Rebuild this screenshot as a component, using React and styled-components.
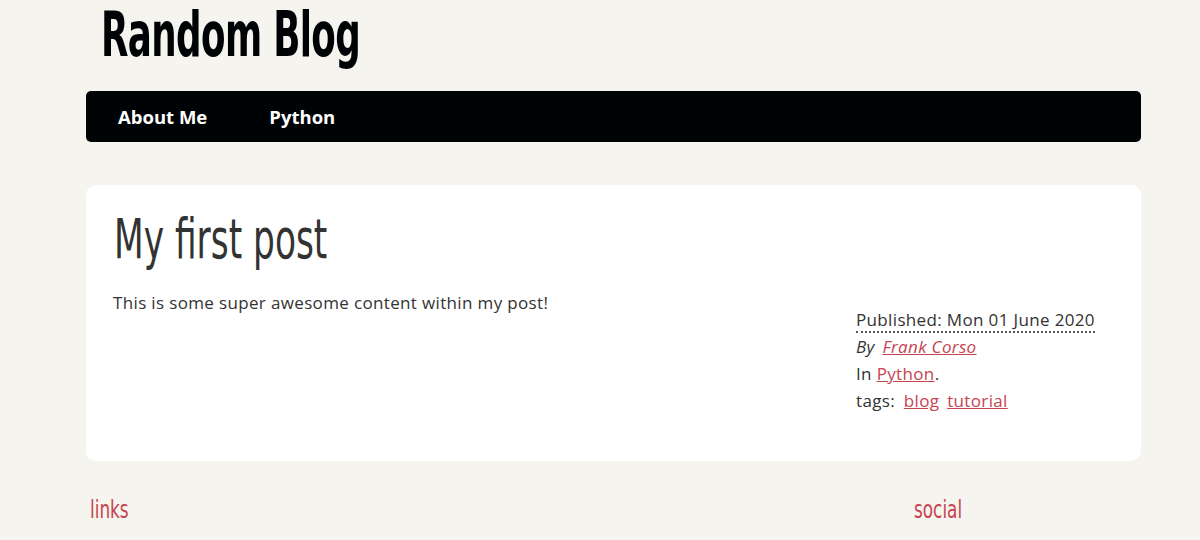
import React from "react";
import styled, { createGlobalStyle } from "styled-components";

const headingFont = `"DejaVu Sans Condensed", "DejaVu Sans", sans-serif`;

const GlobalStyle = createGlobalStyle`
  body {
    margin: 0;
    background: #f5f4ef;
    color: #333;
    font-family: "Open Sans", "DejaVu Sans", sans-serif;
  }
`;

const Page = styled.div`
  width: 1055px;
  margin-left: 86px;
`;

// the heading face in the original is very narrow, so squeeze the condensed one
const Narrow = styled.span`
  display: inline-block;
  white-space: nowrap;
  transform: scaleX(${(p) => p.$sx});
  transform-origin: left center;
`;

const SiteTitle = styled.h1`
  margin: 0;
  padding: 0 0 0 15px;
  height: 91px;
  font-family: ${headingFont};
  font-stretch: condensed;
  font-weight: bold;
  font-size: 62px;
  line-height: 70px;
  letter-spacing: -1px;
  color: #000305;
`;

const Nav = styled.nav`
  display: flex;
  align-items: center;
  gap: 62px;
  height: 51px;
  padding-left: 32px;
  background: #000305;
  border-radius: 5px;
`;

const NavLink = styled.a`
  color: #fff;
  font-weight: bold;
  font-size: 18.5px;
  text-decoration: none;
`;

const Card = styled.article`
  display: flex;
  justify-content: space-between;
  margin-top: 43px;
  height: 276px;
  box-sizing: border-box;
  padding: 24px 45px 0 27px;
  background: #fff;
  border-radius: 10px;
`;

const PostTitle = styled.h2`
  margin: 0;
  padding-left: 1px;
  font-family: ${headingFont};
  font-stretch: condensed;
  font-weight: normal;
  font-size: 55px;
  line-height: 60px;
  color: #333;
`;

const Content = styled.p`
  margin: 22px 0 0 0;
  font-size: 17px;
  letter-spacing: 0.35px;
`;

const Meta = styled.footer`
  margin-top: 97px;
  width: 240px;
  font-size: 17px;
  letter-spacing: 0.35px;
  line-height: 27px;
`;

const Abbr = styled.abbr`
  text-decoration: none;
  border-bottom: 2px dotted #555;
`;

const Author = styled.address`
  font-style: italic;
`;

const Link = styled.a`
  color: #c74350;
  text-decoration: underline;
  margin-left: ${(p) => p.$ml || "0"};
`;

const Footer = styled.div`
  display: flex;
  margin-top: 34px;
`;

const FooterHead = styled.h3`
  margin: 0;
  font-family: ${headingFont};
  font-stretch: condensed;
  font-weight: normal;
  font-size: 25px;
  color: #c74350;
  width: ${(p) => p.$width};
  padding-left: 4px;
`;

export default function App() {
  return (
    <Page>
      <GlobalStyle />
      <SiteTitle>
        <Narrow $sx={0.64}>Random Blog</Narrow>
      </SiteTitle>
      <Nav>
        <NavLink href="#">About Me</NavLink>
        <NavLink href="#">Python</NavLink>
      </Nav>
      <Card>
        <div>
          <PostTitle>
            <Narrow $sx={0.695}>My first post</Narrow>
          </PostTitle>
          <Content>This is some super awesome content within my post!</Content>
        </div>
        <Meta>
          <div>
            <Abbr title="2020-06-01">Published: Mon 01 June 2020</Abbr>
          </div>
          <Author>
            By <Link href="#" $ml="3px">Frank Corso</Link>
          </Author>
          <div>
            In <Link href="#">Python</Link>.
          </div>
          <div>
            tags: <Link href="#" $ml="4px">blog</Link>{" "}
            <Link href="#" $ml="3px">tutorial</Link>
          </div>
        </Meta>
      </Card>
      <Footer>
        <FooterHead $width="820px">
          <Narrow $sx={0.75}>links</Narrow>
        </FooterHead>
        <FooterHead $width="auto">
          <Narrow $sx={0.75}>social</Narrow>
        </FooterHead>
      </Footer>
    </Page>
  );
}
